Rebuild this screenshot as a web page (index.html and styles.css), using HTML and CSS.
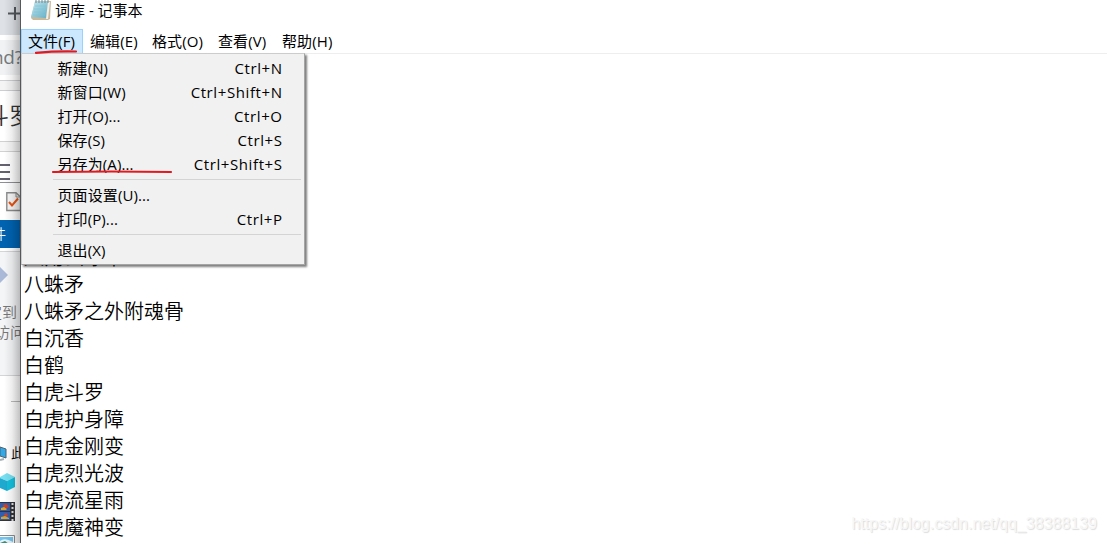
FILE: index.html
```html
<!DOCTYPE html>
<html lang="zh-CN">
<head>
<meta charset="utf-8">
<title>词库 - 记事本</title>
<link rel="stylesheet" href="styles.css">
</head>
<body>
<div class="desktop">
  <aside class="behind">
    <div class="tabs"><svg width="20" height="35"><path d="M8 13.500H20M15 7V20" stroke="#54585d" stroke-width="2"/></svg></div>
    <div class="address"><div class="url">nd?</div></div>
    <div class="bookmarks"></div>
    <div class="query">斗罗</div>
    <div class="gap"></div>
    <div class="burger"><i></i><i></i><i></i></div>
    <div class="quick"><svg width="15" height="20" viewBox="0 0 15 20"><path d="M.8.8H10L14.500 5V18.500H.8Z" fill="#f7f7f7" stroke="#8c8c8c" stroke-width="1.400"/><path d="M10 .8V5H14.500" fill="none" stroke="#8c8c8c"/><path d="M3 10L6 13.500L12 6.500" fill="none" stroke="#e85413" stroke-width="2"/></svg></div>
    <div class="filetab">件</div>
    <div class="ribbon">
      <svg width="9" height="18"><path d="M0 1L8 9L0 17Z" fill="#aab9d8"/></svg>
      <p>定到</p><p class="second">访问</p>
    </div>
    <div class="tree">
      <hr>
      <div class="pc"><svg width="8" height="17"><path d="M0 2L6 4V13L0 11Z" fill="#31a9e8" stroke="#51616e"/><path d="M0 15L4 14" stroke="#a4b0b8" stroke-width="2"/></svg><span>此</span></div>
      <svg class="cube" width="16" height="19"><path d="M0 4L7 0L15 4L7 8L0 5Z" fill="#76dff0"/><path d="M0 5L7 8V18L0 15Z" fill="#20a9cf"/><path d="M7 8L15 4V14L7 18Z" fill="#13bfdd"/></svg>
      <svg class="film" width="15" height="19"><path d="M0 0H15V19H0Z" fill="#33333b"/><path d="M0 1H10V9H0ZM0 10H10V18H0Z" fill="#315eae"/><path d="M3 3L6 2L9 4L8 6H4ZM4 12L7 11L8 14L5 15Z" fill="#c8412e"/><path d="M1 6L4 5L7 7L6 8H1ZM1 15L5 14L9 16V17H1Z" fill="#d8a52c"/><path d="M12.500 1V19" stroke="#e0e0e0" stroke-width="2" stroke-dasharray="2 2"/></svg>
      <svg class="photo" width="15" height="9"><path d="M0 .5H14.500V9" fill="#fff" stroke="#8c8c8c"/><path d="M0 2H13V9H0Z" fill="#72c4ee"/><path d="M0 6Q5 2 13 7V9H0Z" fill="#e5f4f8"/><path d="M0 8L5 6L9 9H0Z" fill="#3c8c76"/></svg>
    </div>
  </aside>
  <main class="notepad">
    <header class="title">
      <svg width="20" height="21" viewBox="0 0 20 21"><defs><linearGradient id="pad" x2="1" y2="1"><stop stop-color="#c5e8ef"/><stop offset="1" stop-color="#61aec7"/></linearGradient></defs><path d="M4 2L20 1L19 19L17 20H2L0 18Z" fill="#c9b99a"/><path d="M4 1H17L15 18L0 17Z" fill="url(#pad)"/><path d="M17 2H19L17 19H15Z" fill="#edf0ec"/><path d="M4 6H15M3 9H15M3 12H14M2 15H14" stroke="#83c3d4" stroke-width=".7"/><path d="M5 0V3M8 0V3M11 0V3M14 0V3M17 0V3" stroke="#7c8588"/></svg>
      <span>词库 - 记事本</span>
    </header>
    <nav class="menubar">
      <span class="open">文件(F)</span><span>编辑(E)</span><span>格式(O)</span><span>查看(V)</span><span>帮助(H)</span>
    </nav>
    <div class="page">
      <p>八角玄冰草</p><p>八蛛矛</p><p>八蛛矛之外附魂骨</p><p>白沉香</p><p>白鹤</p><p>白虎斗罗</p><p>白虎护身障</p><p>白虎金刚变</p><p>白虎烈光波</p><p>白虎流星雨</p><p>白虎魔神变</p>
    </div>
    <div class="menu">
      <div class="item"><span>新建(N)</span><kbd>Ctrl+N</kbd></div>
      <div class="item"><span>新窗口(W)</span><kbd>Ctrl+Shift+N</kbd></div>
      <div class="item"><span>打开(O)...</span><kbd>Ctrl+O</kbd></div>
      <div class="item"><span>保存(S)</span><kbd>Ctrl+S</kbd></div>
      <div class="item"><span>另存为(A)...</span><kbd>Ctrl+Shift+S</kbd></div>
      <div class="rule"></div>
      <div class="item"><span>页面设置(U)...</span></div>
      <div class="item"><span>打印(P)...</span><kbd>Ctrl+P</kbd></div>
      <div class="rule"></div>
      <div class="item"><span>退出(X)</span></div>
    </div>
    <svg class="marks" width="160" height="130"><path d="M15 6.800Q35 5 55 5.500" /><path d="M32 126Q90 125 150 126"/></svg>
    <div class="watermark">https://blog.csdn.net/qq_38388139</div>
  </main>
</div>
</body>
</html>
```
FILE: styles.css
```css
* { box-sizing: border-box; }
body { margin: 0; font-family: "Open Sans", "Noto Sans CJK SC", sans-serif; color: #000; }
p { margin: 0; }
svg { display: block; }
.desktop { display: grid; grid-template-columns: 20px 1087px; width: 1107px; height: 543px; overflow: hidden; background: #fff; }

.behind { position: relative; height: 543px; overflow: hidden; white-space: nowrap; }
.behind::after { content: ""; position: absolute; inset: 0; background: linear-gradient(90deg, transparent 20%, rgba(0,0,0,.07) 60%, rgba(0,0,0,.24)); }
.tabs { height: 35px; background: #dee1e6; }
.address { height: 45px; padding-top: 5px; background: #fff; }
.url { height: 35px; margin-left: -8px; background: #f0f2f4; color: #777b80; font-size: 19px; line-height: 35px; letter-spacing: -.3px; }
.bookmarks { height: 11px; background: #f4f4f5; border: solid #cdced2; border-width: 1px 0; }
.query { height: 50px; margin-left: -14px; font: 350 23px/46px "Noto Sans CJK SC", sans-serif; color: #333; }
.gap { height: 11px; background: #f6f6f6; border: solid #d1d1d1; border-width: 1px 0; }
.burger { height: 30px; padding-top: 12px; display: flex; flex-direction: column; gap: 5px; }
.burger i { width: 10px; height: 2px; flex: none; background: #62616d; }
.quick { height: 38px; border-top: 1px solid #8e8e94; padding: 9px 0 0 6px; }
.filetab { height: 28px; background: #0063b1; color: #fff; font: 350 14px/27px "Noto Sans CJK SC", sans-serif; text-indent: -8px; }
.ribbon { height: 125px; margin-top: 3px; padding-top: 14px; background: #f4f5f7; border: solid #d4d5d7; border-width: 1px 0; font: 350 15px/20px "Noto Sans CJK SC", sans-serif; color: #777; }
.ribbon p { margin: 18px 0 0 -13px; }
.ribbon .second { margin: 0 0 0 -5px; }
.tree { height: 167px; }
.tree hr { width: 9px; height: 1px; margin: 25px 0 0 11px; border: 0; background: #bbb; }
.pc { display: flex; align-items: center; gap: 3px; height: 20px; margin-top: 41px; font: 350 14px/20px "Noto Sans CJK SC", sans-serif; }
.pc svg { flex: none; }
.pc span { margin-top: -2px; }
.cube { margin-top: 10px; }
.film { margin-top: 10px; }
.photo { margin-top: 14px; }

.notepad { position: relative; height: 543px; border-left: 1px solid #55585c; background: #fff; }
.title { display: flex; gap: 4px; height: 29px; padding-left: 10px; font-size: 15px; line-height: 20px; }
.menubar { display: flex; height: 25px; border-bottom: 1px solid #eee; font-size: 15px; line-height: 24px; white-space: nowrap; }
.menubar span { width: 64px; height: 24px; padding-left: 7px; letter-spacing: .1px; }
.menubar span:nth-child(2) { width: 62px; }
.menubar span:nth-child(3) { width: 66px; }
.menubar .open { width: 62px; height: 25px; padding-left: 6px; background: #cce8ff; border: 1px solid #99d1ff; line-height: 22px; }
.page { padding: 189px 0 0 3px; font: 350 20px/27px "Noto Sans CJK SC", sans-serif; }
.menu { position: absolute; left: 0; top: 53px; width: 284px; height: 212px; padding: 3px 3px 3px 2px; background: #f1f1f1; border: 1px solid #ccc; border-right-color: #a5a5a5; border-bottom-color: #a5a5a5; box-shadow: 2px 2px 2px rgba(0,0,0,.5); }
.item { display: flex; justify-content: space-between; height: 24px; padding: 0 19px 0 33.500px; font-size: 15px; line-height: 23px; letter-spacing: .1px; }
.item kbd { font: inherit; letter-spacing: .6px; margin-right: -.6px; }
.rule { height: 5px; margin: 2px 0 0 29px; border-top: 1px solid #d4d4d4; }
.marks { position: absolute; left: 0; top: 46px; fill: none; stroke: #e3191f; stroke-width: 2.2; stroke-linecap: round; }
.watermark { position: absolute; right: 10px; bottom: 9px; font: 400 16px/20px "Liberation Sans", Arial, sans-serif; color: #f7f7f7; text-shadow: 1px 1px 1px #dcdcdc; }
```
